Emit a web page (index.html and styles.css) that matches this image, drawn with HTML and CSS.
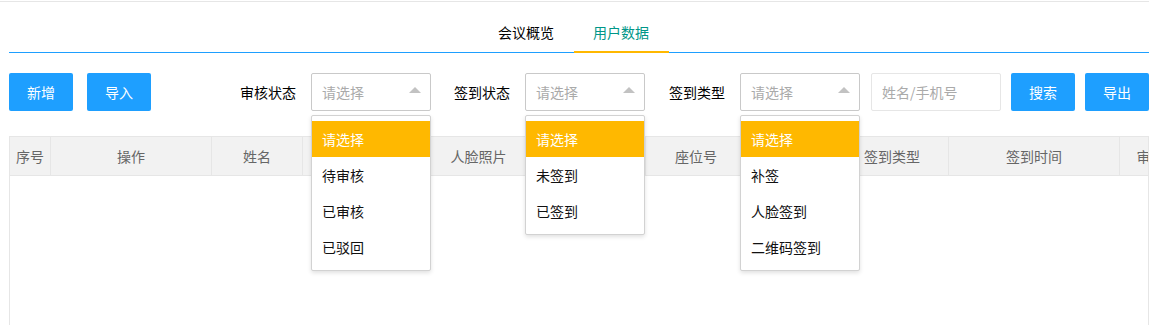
FILE: index.html
```html
<!DOCTYPE html>
<html lang="zh-CN">
<head>
    <meta charset="UTF-8">
    <title>用户数据</title>
    <link rel="stylesheet" href="styles.css">
</head>
<body>
    <div class="topline"></div>

    <div class="tabs">
        <ul class="tab-title">
            <li>会议概览</li>
            <li class="active">用户数据</li>
        </ul>
    </div>

    <div class="toolbar">
        <div class="btns">
            <button class="btn">新增</button>
            <button class="btn">导入</button>
        </div>
        <div class="filters">
            <label class="form-label">审核状态</label>
            <div class="select first">
                <div class="select-input">请选择<i class="edge"></i></div>
                <dl class="options">
                    <dd class="this">请选择</dd>
                    <dd>待审核</dd>
                    <dd>已审核</dd>
                    <dd>已驳回</dd>
                </dl>
            </div>

            <label class="form-label">签到状态</label>
            <div class="select">
                <div class="select-input">请选择<i class="edge"></i></div>
                <dl class="options">
                    <dd class="this">请选择</dd>
                    <dd>未签到</dd>
                    <dd>已签到</dd>
                </dl>
            </div>

            <label class="form-label">签到类型</label>
            <div class="select last">
                <div class="select-input">请选择<i class="edge"></i></div>
                <dl class="options">
                    <dd class="this">请选择</dd>
                    <dd>补签</dd>
                    <dd>人脸签到</dd>
                    <dd>二维码签到</dd>
                </dl>
            </div>

            <input class="input" type="text" placeholder="姓名/手机号">
            <button class="btn">搜索</button>
            <button class="btn">导出</button>
        </div>
    </div>

    <div class="table-box">
        <div class="table-head">
            <div class="th c1">序号</div>
            <div class="th c2">操作</div>
            <div class="th c3">姓名</div>
            <div class="th c4">手机号</div>
            <div class="th c5">人脸照片</div>
            <div class="th c6">单位</div>
            <div class="th c7">座位号</div>
            <div class="th c8">签到状态</div>
            <div class="th c9">签到类型</div>
            <div class="th c10">签到时间</div>
            <div class="th c11">审核状态</div>
        </div>
    </div>
</body>
</html>
```

FILE: styles.css
```css
html, body {
    overflow: hidden;
}
body {
    margin: 0;
    background-color: white;
    font-family: "Noto Sans CJK SC", "Liberation Sans", sans-serif;
    font-size: 14px;
    color: #333;
}
.topline {
    width: 1149px;
    height: 1px;
    border-bottom: 1px solid #e6e6e6;
}
.tabs {
    margin: 10px 12px 0 9px;
}
.tab-title {
    list-style: none;
    margin: 0;
    padding: 0 11px 0 0;
    height: 40px;
    border-bottom: 1px solid #1e9fff;
    display: flex;
    justify-content: center;
}
.tab-title li {
    position: relative;
    width: 95px;
    line-height: 40px;
    text-align: center;
    color: #000;
}
.tab-title li.active {
    color: #009688;
}
.tab-title li.active::after {
    content: "";
    position: absolute;
    left: 0;
    right: 0;
    bottom: -1px;
    height: 2px;
    background-color: #ffb800;
}
.toolbar {
    display: flex;
    justify-content: space-between;
    align-items: center;
    margin: 20px 12px 0 9px;
}
.btns {
    display: flex;
    gap: 14px;
}
.btn {
    height: 38px;
    line-height: 38px;
    padding: 0;
    width: 64px;
    border: none;
    border-radius: 2px;
    background-color: #1e9fff;
    color: white;
    font-family: inherit;
    font-size: 14px;
}
.filters {
    display: flex;
    align-items: center;
}
.filters .btn {
    margin-left: 10px;
}
.form-label {
    color: #000;
    padding-right: 15px;
    line-height: 38px;
}
.select {
    position: relative;
    width: 120px;
    margin-right: 24px;
}
.select.first {
    margin-right: 23px;
}
.select.last {
    margin-right: 0;
}
.select-input {
    position: relative;
    box-sizing: border-box;
    height: 38px;
    line-height: 36px;
    padding-left: 10px;
    border: 1px solid #c9c9c9;
    border-radius: 2px;
    color: #aaa;
}
.edge {
    position: absolute;
    right: 9px;
    top: 7px;
    width: 0;
    height: 0;
    border: 6px solid transparent;
    border-bottom-color: #c2c2c2;
}
.options {
    position: absolute;
    z-index: 10;
    top: 42px;
    left: 0;
    box-sizing: border-box;
    width: 120px;
    margin: 0;
    padding: 5px 0;
    background-color: white;
    border: 1px solid #d2d2d2;
    border-radius: 2px;
    box-shadow: 0 2px 4px rgba(0, 0, 0, .12);
}
.options dd {
    margin: 0;
    padding: 0 10px;
    line-height: 36px;
    color: #111;
}
.options dd.this {
    background-color: #ffb800;
    color: white;
}
.input {
    box-sizing: border-box;
    width: 130px;
    height: 38px;
    margin-left: 11px;
    padding-left: 10px;
    border: 1px solid #e6e6e6;
    border-radius: 2px;
    font-family: inherit;
    font-size: 14px;
    outline: none;
}
.input::placeholder {
    color: #aaa;
}
.table-box {
    margin: 25px 12px 0 9px;
    height: 200px;
    border: 1px solid #e6e6e6;
    overflow: hidden;
}
.table-head {
    display: flex;
    width: 1300px;
    height: 38px;
    background-color: #f2f2f2;
    border-bottom: 1px solid #e6e6e6;
}
.th {
    flex: none;
    box-sizing: border-box;
    line-height: 38px;
    text-align: center;
    color: #666;
    border-right: 1px solid #e6e6e6;
}
.c1 { width: 41px; }
.c2 { width: 161px; }
.c3 { width: 91px; }
.c4 { width: 118px; }
.c5 { width: 116px; }
.c6 { width: 109px; }
.c7 { width: 101px; }
.c8 { width: 89px; }
.c9 { width: 113px; }
.c10 { width: 171px; }
.c11 { width: 90px; }
```
